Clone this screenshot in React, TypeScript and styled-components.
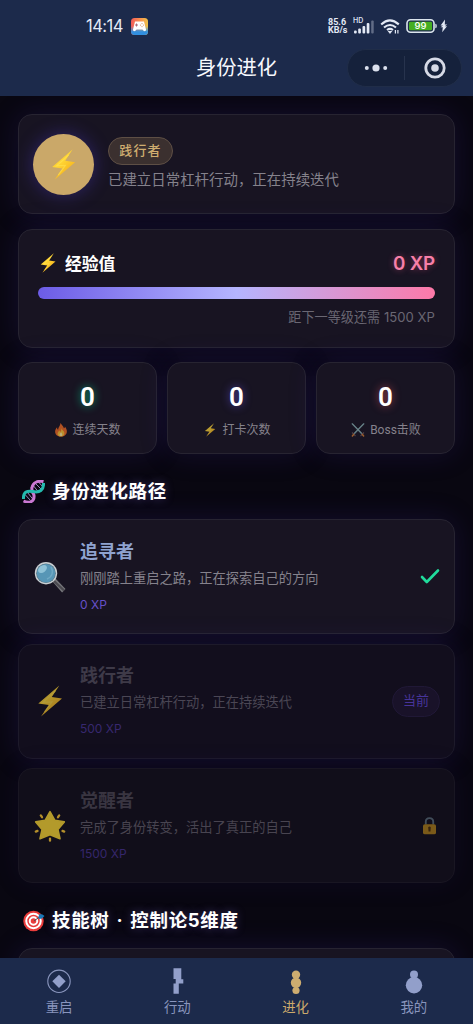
import React from "react";
import styled, { createGlobalStyle, css } from "styled-components";

const GlobalStyle = createGlobalStyle`
  * { box-sizing: border-box; }
  body {
    margin: 0;
    background: #090711;
    font-family: Roboto, "Noto Sans CJK SC", sans-serif;
    color: #fff;
  }
  svg { display: block; flex: none; }
`;

const Screen = styled.div`
  display: flex;
  flex-direction: column;
  width: 473px;
  height: 1024px;
  overflow: hidden;
  background: #090711;
`;

const Header = styled.header`
  flex: none;
  height: 96px;
  background: #1c2a4b;
`;

const StatusBar = styled.div`
  display: flex;
  align-items: center;
  justify-content: space-between;
  height: 48px;
  padding: 4px 25px 0 86px;
`;

const StatusGroup = styled.div<{ $gap: number }>`
  display: flex;
  align-items: center;
  gap: ${(p) => p.$gap}px;
`;

const Clock = styled.span`
  font: 400 16.6px/20px Inter, sans-serif;
  letter-spacing: -0.55px;
  width: 37px;
  white-space: nowrap;
  color: #e3e9f5;
`;

const Speed = styled.div`
  display: flex;
  flex-direction: column;
  font: 700 9px/8px Roboto, sans-serif;
  width: 21px;
  margin-right: -1px;
  white-space: nowrap;
  color: #e3e9f5;
`;

const TitleBar = styled.div`
  display: grid;
  grid-template-columns: 1fr auto 1fr;
  align-items: center;
  height: 39px;
  padding: 0 11px;
`;

const PageTitle = styled.h1`
  grid-column: 2;
  margin: 0;
  font-size: 20.3px;
  line-height: 30px;
  font-weight: 400;
  color: #f6f8fd;
`;

const Capsule = styled.div`
  justify-self: end;
  display: grid;
  grid-template-columns: 1fr 1px 1fr;
  align-items: center;
  justify-items: center;
  width: 115px;
  height: 38px;
  border: 1px solid #202d48;
  border-radius: 19px;
  background: #15213b;
  svg:last-child { margin-left: 3px; }
`;

const CapsuleDivider = styled.i`
  width: 1px;
  height: 24px;
  background: #27334d;
`;

const Content = styled.main`
  flex: 1;
  min-height: 0;
  overflow: hidden;
  padding: 18px 18px 0;
`;

const panel = css`
  border: 1px solid #272431;
  border-radius: 14px;
  background: #181422;
  box-shadow: 0 0 28px rgba(58, 42, 150, 0.22);
`;

const ProfileCard = styled.section`
  ${panel}
  display: flex;
  align-items: center;
  gap: 14px;
  height: 100px;
  padding: 0 14px;
`;

const Avatar = styled.div`
  display: grid;
  place-items: center;
  width: 61px;
  height: 61px;
  border-radius: 50%;
  background: #caa869;
  box-shadow: 0 0 18px rgba(74, 56, 190, 0.45);
`;

const LevelPill = styled.div`
  width: 65px;
  height: 28px;
  border: 1px solid #5e4f45;
  border-radius: 14px;
  background: #3b302f;
  color: #cfad70;
  font-size: 13px;
  line-height: 25px;
  font-weight: 500;
  letter-spacing: 1.2px;
  text-align: center;
`;

const ProfileText = styled.p`
  margin: 6px 0 0;
  font-size: 14.45px;
  line-height: 20px;
  color: #85828c;
`;

const XpCard = styled.section`
  ${panel}
  height: 119px;
  margin-top: 15px;
  padding: 19px 19px 0;
`;

const XpHead = styled.div`
  display: flex;
  align-items: center;
  height: 28px;
`;

const XpLabel = styled.h2`
  flex: 1;
  margin: 1px 0 0 7px;
  font-size: 16.8px;
  line-height: 28px;
  font-weight: 700;
`;

const XpValue = styled.span`
  margin-top: 2px;
  font: 600 18.8px/28px Inter, sans-serif;
  letter-spacing: -0.2px;
  color: #f77fa8;
  text-shadow: 0 0 6px rgba(253, 92, 145, 0.45);
`;

const XpBar = styled.div`
  height: 12px;
  margin-top: 10px;
  border-radius: 6px;
  background: linear-gradient(90deg, #6c5ce7, #b5b5ff 50%, #fd79a8);
`;

const XpHint = styled.p`
  margin: 8px 0 0;
  font-family: Inter, "Noto Sans CJK SC", sans-serif;
  font-size: 13.1px;
  line-height: 20px;
  letter-spacing: 0.04px;
  text-align: right;
  color: #6a6773;
`;

const Stats = styled.section`
  display: grid;
  grid-template-columns: repeat(3, 1fr);
  gap: 10px;
  margin-top: 14px;
`;

const StatCard = styled.div`
  ${panel}
  display: flex;
  flex-direction: column;
  align-items: center;
  height: 92px;
  padding-top: 18px;
`;

const StatValue = styled.div<{ $glow: string }>`
  font: 600 26px/32px Roboto, sans-serif;
  text-shadow: 0 0 8px ${(p) => p.$glow};
`;

const StatLabel = styled.div`
  display: flex;
  align-items: center;
  gap: 5px;
  margin: 7px 0 0 1px;
  font-size: 12px;
  line-height: 20px;
  color: #85828c;
  svg { opacity: 0.7; }
`;

const SectionTitle = styled.h2`
  display: flex;
  align-items: center;
  gap: 7px;
  height: 30px;
  margin: 22px 0 13px;
  padding-left: 4px;
  font-family: Inter, "Noto Sans CJK SC", sans-serif;
  font-size: 18.5px;
  line-height: 30px;
  font-weight: 700;
  letter-spacing: 0.65px;
  text-shadow: 0 0 10px rgba(138, 120, 240, 0.35);
`;

const Dot = styled.span`
  margin: 0 2px;
`;

const StageList = styled.div`
  display: flex;
  flex-direction: column;
  gap: 9.5px;
`;

const StageCard = styled.article<{ $state: "done" | "current" | "locked" }>`
  ${panel}
  display: flex;
  align-items: center;
  height: 115px;
  padding: 0 14px 0 15px;
  ${(p) => p.$state === "current" && css`
    background: #120e1d;
    border-color: #1d1a2a;
  `}
  ${(p) => p.$state === "locked" && css`
    background: #110e1a;
    border-color: #191622;
    box-shadow: 0 0 28px rgba(58, 42, 150, 0.1);
    padding-right: 18px;
  `}
`;

const StageBody = styled.div`
  flex: 1;
  margin: 0 0 0 14px;
`;

const StageName = styled.h3<{ $color: string }>`
  margin: 0;
  font-size: 18px;
  line-height: 26px;
  font-weight: 700;
  color: ${(p) => p.$color};
`;

const StageDesc = styled.p<{ $color: string }>`
  margin: 4px 0 0;
  font-size: 13.25px;
  line-height: 20px;
  color: ${(p) => p.$color};
`;

const StageXp = styled.p<{ $color: string }>`
  margin: 7px 0 1px;
  font: 400 12px/18px Inter, sans-serif;
  color: ${(p) => p.$color};
`;

const CurrentPill = styled.div`
  width: 48px;
  height: 31px;
  border: 1px solid #201836;
  border-radius: 16px;
  background: #191229;
  color: #47349a;
  font-size: 13px;
  line-height: 28px;
  text-align: center;
`;

const NextCard = styled.section`
  ${panel}
  height: 90px;
`;

const TabBar = styled.nav`
  position: relative;
  flex: none;
  display: grid;
  grid-template-columns: repeat(4, 1fr);
  height: 66px;
  background: #1c2a4b;
`;

const Tab = styled.div<{ $active?: boolean }>`
  display: flex;
  flex-direction: column;
  align-items: center;
  padding-top: 9px;
  font-size: 13.4px;
  line-height: 20px;
  color: ${(p) => (p.$active ? "#cdaa6b" : "#8995bd")};
  span { margin-top: 3px; }
`;

const Bolt = ({ size, dim }: { size: number; dim?: boolean }) => (
  <svg width={size} height={size} viewBox="0 0 32 32" opacity={dim ? 0.68 : 1}>
    <defs>
      <linearGradient id="bolt" x1="0" y1="0" x2="0.7" y2="1">
        <stop offset="0" stopColor="#f5a51d" />
        <stop offset="0.45" stopColor="#ffd735" />
        <stop offset="1" stopColor="#f4a916" />
      </linearGradient>
    </defs>
    <path d="M25.3.5 4.3 18.5 14.8 20 7 31.5 28 13.6 17.8 12z" fill="url(#bolt)" />
    <path d="M21.5 6 9 17.3l9-.4-7.5 10" fill="none" stroke="#ffe75a" strokeWidth="1.2" opacity=".5" />
  </svg>
);

const Flame = () => (
  <svg width="12" height="14" viewBox="1 0 24 29">
    <path d="M12 0c3 5 6 6 7 11 2-1 2-3 2-4 8 10 4 21-8 21S-3 17 5 9c0 3 0 4 2 5C7 8 12 6 12 0" fill="#f36b22" />
    <path d="M14 10c0 5 6 6 6 11s-4 7-7 7-8-2-7-7c1-3 3-4 3-6 2 1 2 3 2 4 2-2 3-4 3-9" fill="#ffc332" />
    <path d="M13 19c3 3 4 8 0 8s-4-4 0-8" fill="#fff0a3" />
  </svg>
);

const Swords = () => (
  <svg width="14" height="14" viewBox="0 0 28 28" fill="none">
    <path d="m2 1 21 22M26 1 5 23" stroke="#739b9f" strokeWidth="2.8" />
    <path d="m2 1 20 20M26 1 6 21" stroke="#b5d2d3" strokeWidth="1" />
    <path d="m2 19 7 7m17-7-7 7" stroke="#68545a" strokeWidth="2.2" />
    <path d="m6 22-4 5m20-5 4 5" stroke="#d17b32" strokeWidth="3" />
  </svg>
);

const Dna = () => (
  <svg width="23" height="23" viewBox="0 0 46 46" fill="none">
    <path d="m6 29 11 12M11 25l12 15M16 22l9 11M21 9l11 14M26 6l13 13M33 4l9 10" stroke="#9a86bd" strokeWidth="2" />
    <path d="M3 42c13 6 22 0 21-11-1-7-6-9-4-16C22 5 32 1 43 3" stroke="#cc79d3" strokeWidth="6" />
    <path d="M3 38c-1-15 8-17 19-15 13 3 22-3 21-17" stroke="#24baae" strokeWidth="6" />
  </svg>
);

const Target = () => (
  <svg width="23" height="23" viewBox="0 0 46 46" fill="none">
    <circle cx="23" cy="24" r="20.5" fill="#e93c3b" />
    <circle cx="23" cy="24" r="14.5" stroke="#fff" strokeWidth="4" />
    <circle cx="23" cy="24" r="7.5" stroke="#fff" strokeWidth="4" />
    <circle cx="23" cy="24" r="3" fill="#e93c3b" />
    <path d="m24 24 12-9" stroke="#46525c" strokeWidth="2" />
    <path d="m33 15 2-5 6 1 4 3-5 5-6 1z" fill="#1978b7" />
  </svg>
);

const Magnifier = () => (
  <svg width="32" height="32" viewBox="0 0 32 32">
    <path d="m18 20 3-3 10.5 11-3.4 3.4z" fill="#77787c" />
    <path d="m20 20 10 9.5" stroke="#4c4b51" strokeWidth="2.4" />
    <circle cx="12" cy="12.2" r="11.2" fill="#c9d0d4" />
    <circle cx="12" cy="12.2" r="9.8" fill="#5c7684" />
    <circle cx="12" cy="12.2" r="9.2" fill="#5796b6" />
    <ellipse cx="8.5" cy="8" rx="5" ry="3.4" fill="#8fc2d7" transform="rotate(-38 8.5 8)" />
    <path d="M17 6c3 5 1 10-4 12" fill="none" stroke="#70a9c4" strokeWidth="1.5" />
  </svg>
);

const Star = () => (
  <svg width="32" height="32" viewBox="0 0 32 32">
    <path d="m16 1.6 4.9 8.8 9.4 1.5-6.4 7.6 2.1 9.3-10-4-10 4 2.1-9.3-6.4-7.6 9.4-1.5z" fill="#b39a2b" stroke="#b39a2b" strokeWidth="1.6" strokeLinejoin="round" />
    <path d="M16 28.6v2.1M6.8 5.4l1.2 1.8M25.2 5.4 24 7.2M1.8 21.6l1.7-.7M30.2 21.6l-1.7-.7" stroke="#b48f2b" strokeWidth="2.3" strokeLinecap="round" />
  </svg>
);

const Check = () => (
  <svg width="20" height="18" viewBox="0 0 20 18" fill="none">
    <path d="m2 9 4.8 5L18 2.5" stroke="#20dc9c" strokeWidth="2.6" strokeLinecap="round" strokeLinejoin="round" />
  </svg>
);

const Lock = () => (
  <svg width="13" height="18" viewBox="0 0 14 19">
    <path d="M3 8V5q0-4 4-4t4 4v3" fill="none" stroke="#414d5a" strokeWidth="2" />
    <rect y="7.5" width="14" height="11" rx="2" fill="#7b5a19" />
    <path d="M5.7 12a1.4 1.4 0 1 1 2.6 0L8 15.5H6z" fill="#37230f" />
  </svg>
);

const GameBadge = () => (
  <svg width="17" height="17" viewBox="0 0 34 34">
    <defs>
      <linearGradient id="game" x1="0" y1="0" x2="1" y2="0">
        <stop stopColor="#f15b59" /><stop offset=".55" stopColor="#fa924c" /><stop offset="1" stopColor="#ebc34c" />
      </linearGradient>
      <linearGradient id="gameBase" x1="0" y1="0" x2="0" y2="1">
        <stop offset=".48" stopColor="#389eea" stopOpacity="0" /><stop offset=".82" stopColor="#318fdf" />
      </linearGradient>
    </defs>
    <rect width="34" height="34" rx="7" fill="url(#game)" />
    <rect width="34" height="34" rx="7" fill="url(#gameBase)" />
    <path d="M8 7h18l4 16c0 4-4 5-7 0H11c-3 5-7 4-7 0z" fill="#fff" />
    <path d="M8 14h6m-3-3v6" stroke="#aa6b78" strokeWidth="2" />
    <path d="M22 11v.1M25 14v.1M19 14v.1M22 17v.1" stroke="#d79d6f" strokeWidth="2.5" strokeLinecap="round" />
  </svg>
);

const Signal = () => (
  <svg width="22" height="18" viewBox="0 0 22 18">
    <text x="0" y="6.3" fontFamily="Inter, sans-serif" fontSize="7" fontWeight="600" fill="#d6deee">HD</text>
    <g fill="#e3e9f5">
      <rect x="1" y="13.5" width="2.7" height="3" rx="1" /><rect x="5.2" y="11.5" width="2.7" height="5" rx="1" />
      <rect x="9.5" y="9" width="2.7" height="7.5" rx="1" /><rect x="13.7" y="6" width="2.7" height="10.5" rx="1" />
      <rect x="18.2" y="3.5" width="2.5" height="13" rx="1" opacity=".35" />
    </g>
  </svg>
);

const Wifi = () => (
  <svg width="21" height="17" viewBox="0 0 21 17" fill="none" stroke="#e3e9f5">
    <path d="M1.2 6.4q8.7-8 17.6 0M4 9.5q6-5 12 0M7 12q3-2.2 6 0" strokeWidth="2.1" />
    <path d="M7.7 13h4.6L10 16z" fill="#e3e9f5" stroke="none" />
    <path d="M15.4 12v3.6M17.9 15.6V12" strokeWidth="1.2" />
  </svg>
);

const Battery = () => (
  <svg width="42" height="16" viewBox="0 0 42 16">
    <rect x="1" y="1.8" width="27" height="12.4" rx="3.5" fill="none" stroke="#dbe5ed" strokeWidth="1.6" />
    <rect x="3" y="3.7" width="23" height="8.6" rx="1.3" fill="#45ae22" />
    <text x="14.5" y="11.4" textAnchor="middle" fontFamily="Inter, sans-serif" fontSize="9.5" fontWeight="500" fill="#fff">99</text>
    <path d="M29.3 5.8q1.5 0 1.5 2.2t-1.5 2.2z" fill="#dbe5ed" />
    <path d="m39 1.6-4.4 5.8h2.4l-2.4 1.8h2.2l-.6 5 4.8-6h-2.2l2.4-1.8h-2.4z" fill="#e3e9f5" />
  </svg>
);

const MenuDots = () => (
  <svg width="24" height="10" viewBox="0 0 24 10" fill="#dbe0ed">
    <circle cx="2.8" cy="5" r="2" /><circle cx="12" cy="5" r="3.6" /><circle cx="21.2" cy="5" r="2" />
  </svg>
);

const CloseRing = () => (
  <svg width="22" height="22" viewBox="0 0 22 22" fill="none">
    <circle cx="11" cy="11" r="9.2" stroke="#d6dae6" strokeWidth="2.8" /><circle cx="11" cy="11" r="3.8" fill="#d6dae6" />
  </svg>
);

const RestartIcon = () => (
  <svg width="26" height="28" viewBox="0 0 26 28" fill="none">
    <circle cx="13" cy="14.3" r="11.2" stroke="#8995bd" strokeWidth="1.1" />
    <path d="m13 7.7 6.7 6.6-6.7 6.6-6.7-6.6z" fill="#929fca" />
  </svg>
);
const ActionIcon = () => (
  <svg width="26" height="28" viewBox="0 0 26 28">
    <path d="M9.5 1.2h7.8v11h2v4.4h-4.5v10.2H9.5V16.6h2.2V12H9.5z" fill="#929fca" />
  </svg>
);
const EvolveIcon = () => (
  <svg width="26" height="28" viewBox="0 0 26 28" fill="#cdac70">
    <circle cx="13" cy="7.7" r="4.2" /><circle cx="13" cy="15.8" r="5.2" /><circle cx="13" cy="23.5" r="3.6" />
  </svg>
);
const MineIcon = () => (
  <svg width="26" height="28" viewBox="0 0 26 28" fill="#929fca">
    <circle cx="13" cy="7.5" r="4" /><circle cx="13" cy="18.2" r="8.2" />
  </svg>
);

export default function App() {
  return (
    <>
      <GlobalStyle />
      <Screen>
        <Header>
          <StatusBar>
            <StatusGroup $gap={8}><Clock>14:14</Clock><GameBadge /></StatusGroup>
            <StatusGroup $gap={5}><Speed><span>85.6</span><span>KB/s</span></Speed><Signal /><Wifi /><Battery /></StatusGroup>
          </StatusBar>
          <TitleBar>
            <PageTitle>身份进化</PageTitle>
            <Capsule><MenuDots /><CapsuleDivider /><CloseRing /></Capsule>
          </TitleBar>
        </Header>

        <Content>
          <ProfileCard>
            <Avatar><Bolt size={31} /></Avatar>
            <div>
              <LevelPill>践行者</LevelPill>
              <ProfileText>已建立日常杠杆行动，正在持续迭代</ProfileText>
            </div>
          </ProfileCard>

          <XpCard>
            <XpHead><Bolt size={20} /><XpLabel>经验值</XpLabel><XpValue>0 XP</XpValue></XpHead>
            <XpBar />
            <XpHint>距下一等级还需 1500 XP</XpHint>
          </XpCard>

          <Stats>
            <StatCard><StatValue $glow="rgba(0, 216, 144, 0.7)">0</StatValue><StatLabel><Flame />连续天数</StatLabel></StatCard>
            <StatCard><StatValue $glow="rgba(98, 83, 220, 0.7)">0</StatValue><StatLabel><Bolt size={14} />打卡次数</StatLabel></StatCard>
            <StatCard><StatValue $glow="rgba(219, 85, 96, 0.7)">0</StatValue><StatLabel><Swords />Boss击败</StatLabel></StatCard>
          </Stats>

          <SectionTitle><Dna />身份进化路径</SectionTitle>
          <StageList>
            <StageCard $state="done">
              <Magnifier />
              <StageBody>
                <StageName $color="#8fa3cf">追寻者</StageName>
                <StageDesc $color="#85828c">刚刚踏上重启之路，正在探索自己的方向</StageDesc>
                <StageXp $color="#6650c8">0 XP</StageXp>
              </StageBody>
              <Check />
            </StageCard>
            <StageCard $state="current">
              <Bolt size={32} dim />
              <StageBody>
                <StageName $color="#3e3a48">践行者</StageName>
                <StageDesc $color="#4a4654">已建立日常杠杆行动，正在持续迭代</StageDesc>
                <StageXp $color="#37286f">500 XP</StageXp>
              </StageBody>
              <CurrentPill>当前</CurrentPill>
            </StageCard>
            <StageCard $state="locked">
              <Star />
              <StageBody>
                <StageName $color="#393541">觉醒者</StageName>
                <StageDesc $color="#484450">完成了身份转变，活出了真正的自己</StageDesc>
                <StageXp $color="#35266b">1500 XP</StageXp>
              </StageBody>
              <Lock />
            </StageCard>
          </StageList>

          <SectionTitle><Target /><span>技能树<Dot> · </Dot>控制论5维度</span></SectionTitle>
          <NextCard />
        </Content>

        <TabBar>
          <Tab><RestartIcon /><span>重启</span></Tab>
          <Tab><ActionIcon /><span>行动</span></Tab>
          <Tab $active><EvolveIcon /><span>进化</span></Tab>
          <Tab><MineIcon /><span>我的</span></Tab>
        </TabBar>
      </Screen>
    </>
  );
}
